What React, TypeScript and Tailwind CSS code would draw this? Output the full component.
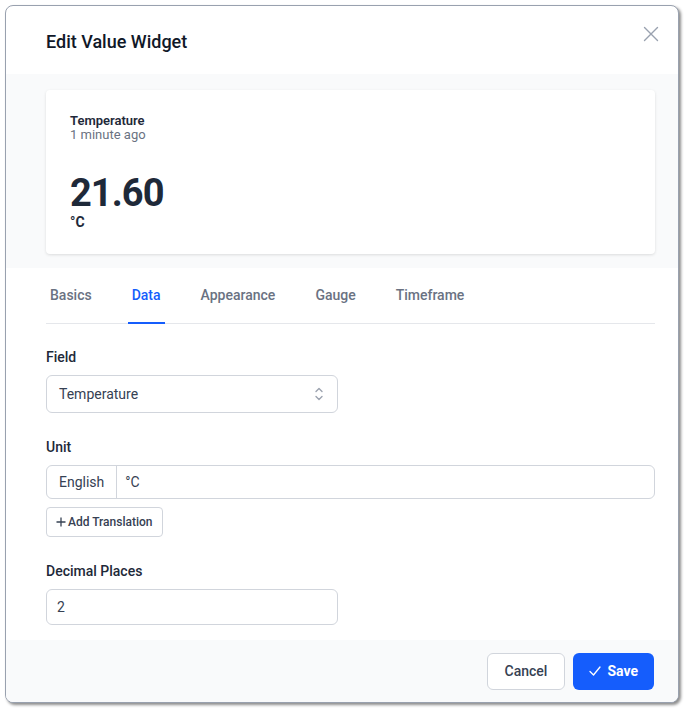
import React from "react";

const font = { fontFamily: "Roboto, 'Noto Sans', 'Liberation Sans', sans-serif" };

function Label({ children }: { children: React.ReactNode }) {
  return <div className="text-sm font-medium text-gray-800 leading-5 mb-2">{children}</div>;
}

export default function App() {
  const tabs = ["Basics", "Data", "Appearance", "Gauge", "Timeframe"];
  return (
    <div className="w-[687px] h-[712px] bg-white pt-[5px] pl-[5px]" style={font}>
      <div className="w-[674px] h-[698px] rounded-lg border border-gray-400 shadow-[2px_2px_3px_rgba(0,0,0,0.45)] bg-white flex flex-col overflow-hidden">
        {/* Header */}
        <div className="relative h-[68px] shrink-0 flex items-center pl-10">
          <h2 className="text-[18px] font-medium text-gray-900 pt-[2px]">Edit Value Widget</h2>
          <button className="absolute top-[20px] right-[19px] text-gray-400">
            <svg width="16" height="16" viewBox="0 0 16 16" fill="none" stroke="currentColor" strokeWidth="1.4" strokeLinecap="round">
              <path d="M1.5 1.5 L14.5 14.5 M14.5 1.5 L1.5 14.5" />
            </svg>
          </button>
        </div>

        {/* Preview */}
        <div className="bg-gray-50 pl-10 pr-[23px] pt-4 pb-[14px] shrink-0">
          <div className="h-[164px] bg-white rounded-sm shadow-[0_1px_3px_rgba(0,0,0,0.12)] pl-6 pt-[24px]">
            <div className="text-[13px] font-semibold text-gray-800 leading-[14px]">Temperature</div>
            <div className="text-[13px] text-gray-500 leading-[14px]">1 minute ago</div>
            <div className="mt-[32px] text-[38px] font-bold tracking-tight text-gray-800 leading-none">21.60</div>
            <div className="mt-[3px] text-sm font-bold text-gray-800 leading-none">°C</div>
          </div>
        </div>

        {/* Form */}
        <div className="flex-1 pl-10 pr-[23px]">
          <div className="flex gap-8 border-b border-gray-200">
            {tabs.map((t) => (
              <div
                key={t}
                className={
                  t === "Data"
                    ? "px-1 pt-[17px] pb-[17px] -mb-px border-b-2 border-blue-600 text-sm font-medium text-blue-600 leading-5"
                    : "px-1 pt-[17px] pb-[17px] -mb-px border-b-2 border-transparent text-sm font-medium text-gray-500 leading-5"
                }
              >
                {t}
              </div>
            ))}
          </div>

          <div className="mt-[23px]">
            <Label>Field</Label>
            <div className="w-[292px] h-[38px] rounded-md border border-gray-300 bg-white flex items-center justify-between pl-3 pr-3">
              <span className="text-sm text-gray-700">Temperature</span>
              <svg width="12" height="16" viewBox="0 0 12 16" fill="none" stroke="#9ca3af" strokeWidth="1.4" strokeLinecap="round" strokeLinejoin="round">
                <path d="M3 5.5 L6 2.5 L9 5.5" />
                <path d="M3 10.5 L6 13.5 L9 10.5" />
              </svg>
            </div>
          </div>

          <div className="mt-6">
            <Label>Unit</Label>
            <div className="h-[34px] rounded-md border border-gray-300 bg-white flex items-stretch">
              <div className="px-3 flex items-center border-r border-gray-300 text-sm text-gray-700">English</div>
              <div className="pl-2 flex items-center text-sm text-gray-700">°C</div>
            </div>
            <button className="mt-2 h-[30px] pl-[9px] pr-[9px] rounded border border-gray-300 bg-white flex items-center gap-[2px] text-xs font-medium text-gray-700">
              <svg width="10" height="10" viewBox="0 0 10 10" fill="none" stroke="currentColor" strokeWidth="1.3">
                <path d="M5 0.5 V9.5 M0.5 5 H9.5" />
              </svg>
              Add Translation
            </button>
          </div>

          <div className="mt-6">
            <Label>Decimal Places</Label>
            <div className="w-[292px] h-[36px] rounded-md border border-gray-300 bg-white flex items-center pl-[10px] text-sm text-gray-700">
              2
            </div>
          </div>
        </div>

        {/* Footer */}
        <div className="h-[62px] shrink-0 bg-gray-50 flex items-center justify-end gap-2 pr-[24px]">
          <button className="h-[37px] px-[17px] rounded-md border border-gray-300 bg-white text-sm font-medium text-gray-700">
            Cancel
          </button>
          <button className="h-[37px] px-4 rounded-md bg-blue-600 text-white text-sm font-bold flex items-center gap-[6px]">
            <svg width="12" height="12" viewBox="0 0 12 12" fill="none" stroke="currentColor" strokeWidth="1.3" strokeLinecap="round" strokeLinejoin="round">
              <path d="M1 6.5 L4.5 10 L11 2" />
            </svg>
            Save
          </button>
        </div>
      </div>
    </div>
  );
}
